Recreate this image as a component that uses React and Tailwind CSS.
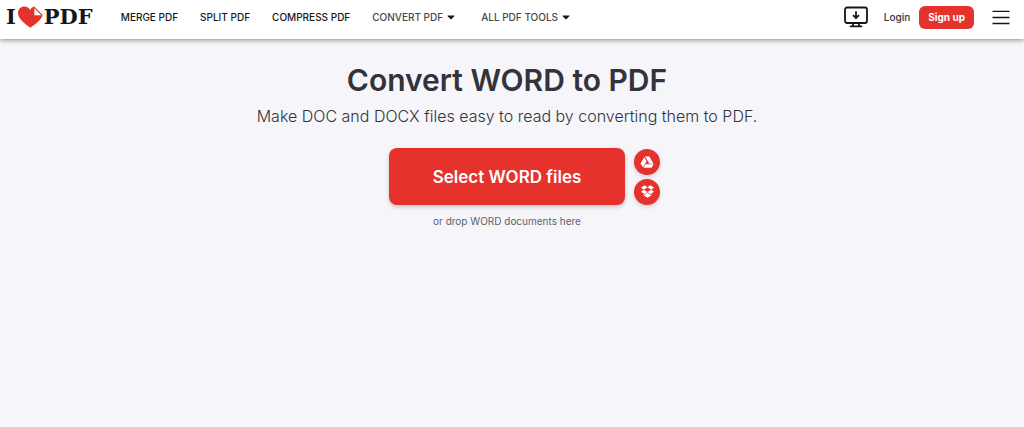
import { FaCaretDown } from "react-icons/fa";

const links = ["Merge PDF", "Split PDF", "Compress PDF"];
const menus = ["Convert PDF", "All PDF tools"];

function Logo() {
  return (
    <a
      href="/"
      aria-label="I love PDF"
      className="flex items-center font-['DejaVu_Serif',serif] text-[21px] leading-6 font-bold text-[#161616]"
    >
      <span>I</span>
      <svg viewBox="0 0 26 22" className="mx-px h-[22px] w-[26px]" aria-hidden="true">
        <path
          fill="#e5322d"
          d="M13.500 21.700C9 18.500 1 13 1 7.200C1 3.300 3.900 0.600 7.400 0.600C10 0.600 12 1.900 13.200 3.900C14.200 2 15.600 0.900 17.200 0.500L25.500 8.800C25.300 13.500 18 18.500 13.500 21.700Z"
        />
        <path fill="#fff" d="M17.300 2.200V9.300H24.300Z" />
      </svg>
      <span>PDF</span>
    </a>
  );
}

function DesktopIcon() {
  return (
    <svg
      viewBox="0 0 24 22"
      className="h-[22px] w-6"
      fill="none"
      stroke="#161616"
      strokeWidth="1.8"
      strokeLinecap="round"
      strokeLinejoin="round"
      aria-hidden="true"
    >
      <rect x="1" y="1.500" width="22" height="15.500" rx="2" />
      <path d="M12 6v6M9.500 9.700l2.500 2.500 2.500-2.500M9 17v3M15 17v3M6.500 20.300h11" />
    </svg>
  );
}

function MenuIcon() {
  return (
    <svg viewBox="0 0 18 16" className="h-4 w-[18px]" stroke="#161616" strokeWidth="1.4" aria-hidden="true">
      <path d="M0.500 2.400h17M0.500 8.500h17M0.500 14.500h17" />
    </svg>
  );
}

function DriveIcon() {
  return (
    <svg viewBox="0 0 14 12" className="h-3 w-3.5" fill="#fff" aria-hidden="true">
      <path d="M4.600 0.500h4.700l4.200 7.200H9.400L5.800 1.400z" />
      <path d="M4.300 1.200L6.600 5.200L3 11.300L0.500 7.600z" />
      <path d="M5.500 8.300h8.100L11.500 11.700H3.500z" />
    </svg>
  );
}

function DropboxIcon() {
  return (
    <svg viewBox="0 0 12 12" className="size-[13px]" fill="#fff" aria-hidden="true">
      <path d="M3.500 0.200L6 2.100L2.500 4.300L0 2.300zM8.500 0.200L12 2.300L9.500 4.300L6 2.100z" />
      <path d="M2.500 4.300L6 6.500L3.500 8.500L0 6.300zM9.500 4.300L12 6.300L8.500 8.500L6 6.500z" />
      <path d="M6 7.200L8.500 9.200L9.700 8.500V9.400L6 11.800L2.300 9.400V8.500L3.500 9.200z" />
    </svg>
  );
}

export default function App() {
  return (
    <div className="min-h-screen bg-[#f5f5fa] font-[Inter,sans-serif] text-[#33333b]">
      <header className="flex h-[39px] items-center bg-white pt-px pr-3.5 pb-1.5 pl-1.5 shadow-[0_1px_5px_rgba(0,0,0,0.45)]">
        <Logo />
        <nav className="ml-7 flex items-center gap-[22px] text-[10px] leading-4 font-medium whitespace-nowrap uppercase">
          {links.map((label) => (
            <a key={label} href="#" className="text-[#161616]">
              {label}
            </a>
          ))}
          {menus.map((label) => (
            <button key={label} type="button" className="flex items-center gap-0.5 pr-0.5 uppercase text-[#47474f]">
              {label}
              <FaCaretDown className="size-3 text-[#161616]" />
            </button>
          ))}
        </nav>

        <div className="ml-auto flex items-center text-[10px] leading-4">
          <a href="#" aria-label="Download desktop app">
            <DesktopIcon />
          </a>
          <a href="#" className="ml-4 font-medium">
            Login
          </a>
          <a href="#" className="ml-[9px] rounded-md bg-[#e5322d] px-[9px] py-1 leading-[15px] font-bold text-white">
            Sign up
          </a>
          <button type="button" aria-label="Menu" className="ml-[18px]">
            <MenuIcon />
          </button>
        </div>
      </header>

      <main className="flex flex-col items-center pt-[23px] pr-2.5 text-center">
        <h1 className="text-[30px] leading-9 font-semibold">Convert WORD to PDF</h1>
        <h2 className="mt-2 text-base leading-5 font-light text-[#33333b]">
          Make DOC and DOCX files easy to read by converting them to PDF.
        </h2>

        <div className="mt-[22px] grid grid-cols-[26px_auto_26px] items-center gap-x-[9px]">
          <button
            type="button"
            className="col-start-2 h-[57px] w-[236px] rounded-lg bg-[#e5322d] text-[17px] leading-6 font-semibold text-white shadow-[0_2px_4px_rgba(0,0,0,0.2)]"
          >
            Select WORD files
          </button>
          <div className="flex flex-col gap-1">
            <button
              type="button"
              aria-label="Select from Google Drive"
              className="flex size-[26px] items-center justify-center rounded-full bg-[#e5322d] shadow-[0_2px_4px_rgba(0,0,0,0.15)]"
            >
              <DriveIcon />
            </button>
            <button
              type="button"
              aria-label="Select from Dropbox"
              className="flex size-[26px] items-center justify-center rounded-full bg-[#e5322d] shadow-[0_2px_4px_rgba(0,0,0,0.15)]"
            >
              <DropboxIcon />
            </button>
          </div>
        </div>

        <p className="mt-2 text-[10px] leading-4 text-[#5f5f6b]">or drop WORD documents here</p>
      </main>
    </div>
  );
}
